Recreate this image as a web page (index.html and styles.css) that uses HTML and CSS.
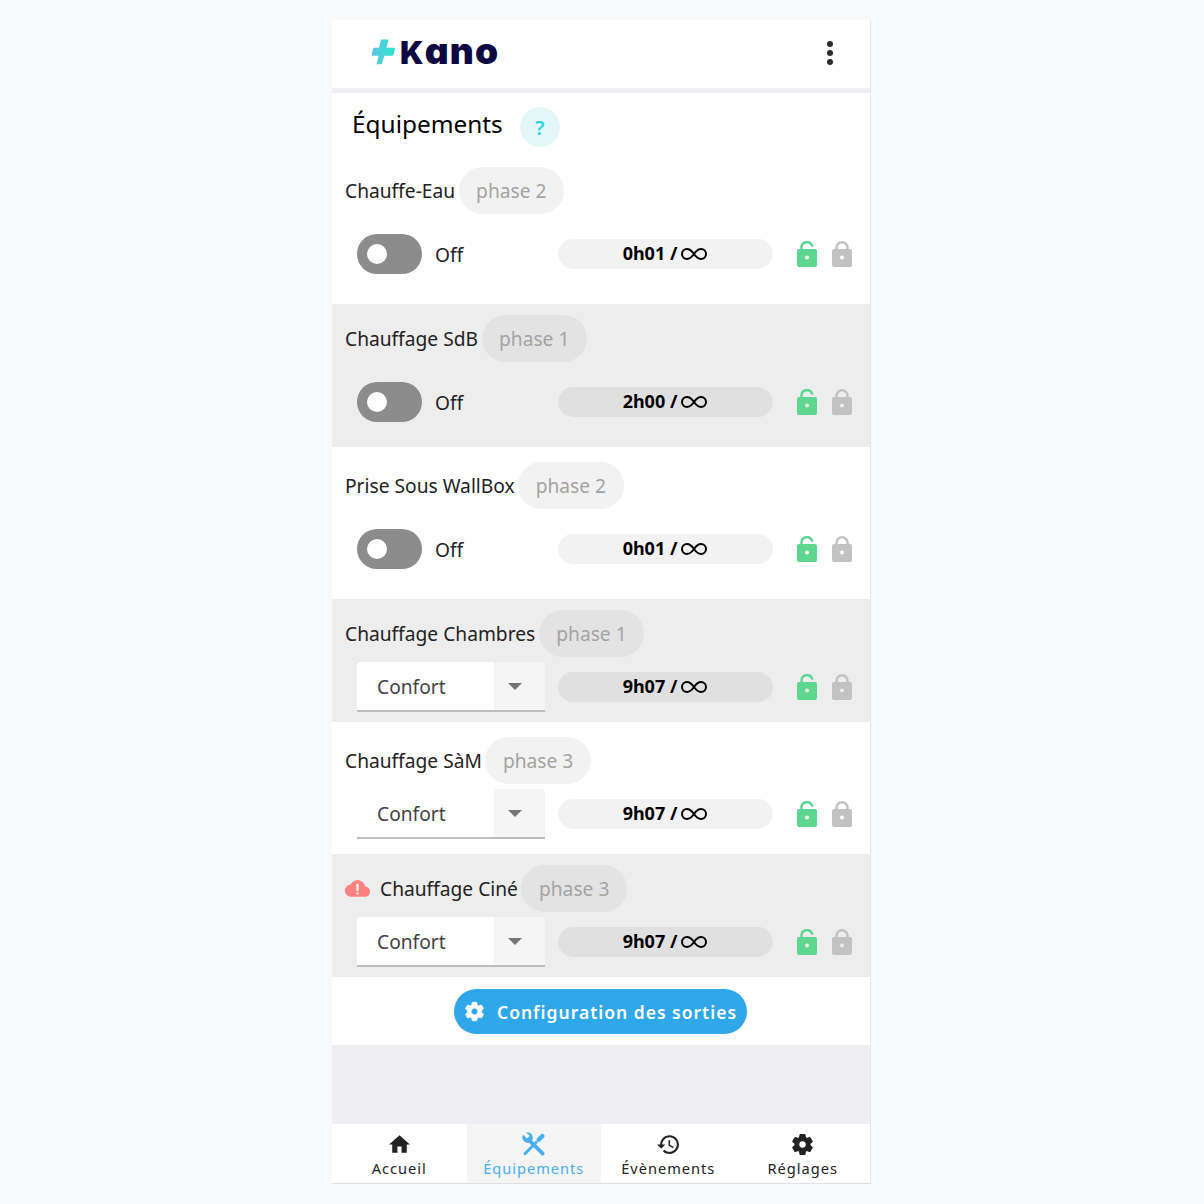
FILE: index.html
```html
<!DOCTYPE html>
<html lang="fr">
<head>
<meta charset="utf-8">
<title>Kano</title>
<link rel="stylesheet" href="styles.css">
</head>
<body>
<svg class="defs" width="0" height="0" aria-hidden="true">
  <symbol id="inf" viewBox="0 0 26 14"><path fill="none" stroke="#000" stroke-width="2" d="M13 7C10.5 3.5 8.5 2 6 2A5 5 0 0 0 6 12C8.5 12 10.5 10.5 13 7C15.5 3.5 17.5 2 20 2A5 5 0 0 1 20 12C17.5 12 15.5 10.5 13 7Z"/></symbol>
  <symbol id="open" viewBox="0 0 20 26"><path d="M4.5 9.5V6.8a5.5 5.5 0 0 1 10.6-2.2" fill="none" stroke="#5fd68f" stroke-width="2.5" stroke-linecap="round"/><path fill-rule="evenodd" fill="#5fd68f" d="M2 8h16a2 2 0 0 1 2 2v14a2 2 0 0 1-2 2H2a2 2 0 0 1-2-2V10a2 2 0 0 1 2-2zm8 6.5a2 2 0 1 0 0 4 2 2 0 0 0 0-4z"/></symbol>
  <symbol id="shut" viewBox="0 0 20 26"><path d="M4.5 9.5V6.800a5.5 5.5 0 0 1 11 0V9.5" fill="none" stroke="#c2c2c2" stroke-width="2.5"/><path fill-rule="evenodd" fill="#c2c2c2" d="M2 8h16a2 2 0 0 1 2 2v14a2 2 0 0 1-2 2H2a2 2 0 0 1-2-2V10a2 2 0 0 1 2-2zm8 6.5a2 2 0 1 0 0 4 2 2 0 0 0 0-4z"/></symbol>
  <symbol id="gear" viewBox="0 0 24 24"><path stroke="currentColor" stroke-width="1" d="M19.14 12.94c.04-.3.06-.61.06-.94 0-.32-.02-.64-.07-.94l2.03-1.58c.18-.14.23-.41.12-.61l-1.92-3.32c-.12-.22-.37-.29-.59-.22l-2.39.96c-.5-.38-1.03-.7-1.62-.94l-.36-2.54c-.04-.24-.24-.41-.48-.41h-3.84c-.24 0-.43.17-.47.41l-.36 2.54c-.59.24-1.13.57-1.62.94l-2.39-.96c-.22-.08-.47 0-.59.22L2.74 8.87c-.12.21-.08.47.12.61l2.03 1.58c-.05.3-.09.63-.09.94s.02.64.07.94l-2.03 1.58c-.18.14-.23.41-.12.61l1.92 3.32c.12.22.37.29.59.22l2.39-.96c.5.38 1.03.7 1.62.94l.36 2.54c.05.24.24.41.48.41h3.84c.24 0 .44-.17.47-.41l.36-2.54c.59-.24 1.13-.56 1.62-.94l2.39.96c.22.08.47 0 .59-.22l1.92-3.32c.12-.22.07-.47-.12-.61l-2.01-1.58zM12 15.6c-1.98 0-3.6-1.62-3.6-3.6s1.62-3.6 3.6-3.6 3.6 1.62 3.6 3.6-1.62 3.6-3.6 3.6z"/></symbol>
</svg>

<main class="app">
  <header class="topbar">
    <div class="logo">
      <svg class="bolt" viewBox="0 0 24 26"><defs><linearGradient id="boltfill" x1="0" x2="1" y1="0.2" y2="0.2"><stop offset="0" stop-color="#62c3ea"/><stop offset="1" stop-color="#2be6c6"/></linearGradient></defs><path fill="url(#boltfill)" d="M10 .5H17.5L15.3 8.8H23Q24.3 8.8 24 10L22.5 15.5Q22.2 16.8 21 16.8H13.3L11.2 24Q11 25.2 9.8 25.2H5.5L7.6 16.8H1.5Q.4 16.8 .7 15.5L2.1 10Q2.4 8.8 3.6 8.8H8Z"/></svg>
      <span class="word"><span class="word-k">K</span>ano</span>
    </div>
    <div class="kebab"><i></i><i></i><i></i></div>
  </header>

  <section class="list">
    <div class="title-row">
      <h1 class="title">Équipements</h1>
      <span class="help">?</span>
    </div>

    <article class="row tall">
      <div class="head"><span class="name">Chauffe-Eau</span><span class="phase">phase 2</span></div>
      <div class="controls">
        <div class="left"><span class="toggle"><b></b></span><span class="off">Off</span></div>
        <div class="timer"><span class="time">0h01 /</span><svg class="inf"><use href="#inf"/></svg></div>
        <svg class="lock"><use href="#open"/></svg><svg class="lock"><use href="#shut"/></svg>
      </div>
    </article>

    <article class="row tall alt">
      <div class="head"><span class="name">Chauffage SdB</span><span class="phase">phase 1</span></div>
      <div class="controls">
        <div class="left"><span class="toggle"><b></b></span><span class="off">Off</span></div>
        <div class="timer"><span class="time">2h00 /</span><svg class="inf"><use href="#inf"/></svg></div>
        <svg class="lock"><use href="#open"/></svg><svg class="lock"><use href="#shut"/></svg>
      </div>
    </article>

    <article class="row tall">
      <div class="head"><span class="name">Prise Sous WallBox</span><span class="phase">phase 2</span></div>
      <div class="controls">
        <div class="left"><span class="toggle"><b></b></span><span class="off">Off</span></div>
        <div class="timer"><span class="time">0h01 /</span><svg class="inf"><use href="#inf"/></svg></div>
        <svg class="lock"><use href="#open"/></svg><svg class="lock"><use href="#shut"/></svg>
      </div>
    </article>

    <article class="row alt">
      <div class="head"><span class="name">Chauffage Chambres</span><span class="phase">phase 1</span></div>
      <div class="controls">
        <div class="left"><div class="select"><span class="value">Confort</span><span class="arrow"><i></i></span></div></div>
        <div class="timer"><span class="time">9h07 /</span><svg class="inf"><use href="#inf"/></svg></div>
        <svg class="lock"><use href="#open"/></svg><svg class="lock"><use href="#shut"/></svg>
      </div>
    </article>

    <article class="row">
      <div class="head"><span class="name">Chauffage SàM</span><span class="phase">phase 3</span></div>
      <div class="controls">
        <div class="left"><div class="select"><span class="value">Confort</span><span class="arrow"><i></i></span></div></div>
        <div class="timer"><span class="time">9h07 /</span><svg class="inf"><use href="#inf"/></svg></div>
        <svg class="lock"><use href="#open"/></svg><svg class="lock"><use href="#shut"/></svg>
      </div>
    </article>

    <article class="row alt">
      <div class="head">
        <svg class="cloud" viewBox="0 0 24 24"><path fill="#ff8080" d="M19.35 10.04C18.67 6.59 15.64 4 12 4 9.11 4 6.6 5.64 5.35 8.04 2.34 8.36 0 10.91 0 14c0 3.31 2.69 6 6 6h13c2.76 0 5-2.24 5-5 0-2.64-2.05-4.78-4.65-4.96z"/><path fill="#fff" d="M11 7.5h2v7h-2zM11 15.8h2v2h-2z"/></svg>
        <span class="name">Chauffage Ciné</span><span class="phase">phase 3</span>
      </div>
      <div class="controls">
        <div class="left"><div class="select"><span class="value">Confort</span><span class="arrow"><i></i></span></div></div>
        <div class="timer"><span class="time">9h07 /</span><svg class="inf"><use href="#inf"/></svg></div>
        <svg class="lock"><use href="#open"/></svg><svg class="lock"><use href="#shut"/></svg>
      </div>
    </article>

    <div class="action">
      <button class="config"><svg class="config-icon"><use href="#gear"/></svg>Configuration des sorties</button>
    </div>
  </section>

  <div class="spacer"></div>

  <nav class="nav">
    <div class="tab">
      <svg class="tab-icon" viewBox="0 0 24 24"><path d="M10 20v-6h4v6h5v-8h3L12 3 2 12h3v8z"/></svg>
      <span class="tab-label">Accueil</span>
    </div>
    <div class="tab active">
      <svg class="tab-icon" viewBox="0 0 24 24"><g fill="none" stroke="currentColor" stroke-linecap="round"><path stroke-width="3.6" d="M8.5 8.5L20.8 20.8"/><path stroke-width="2.8" d="M3.8 20.8L14.5 10"/><path stroke-width="4.2" d="M17 7.5L20.5 4"/></g><path fill="currentColor" d="M2.2 2.6L5.8 6.2 8.4 3.6 5 .6C8 -.2 11.2 1.8 11.4 5.2c.2 3.6-3.4 6-6.6 4.8C1.6 8.800 .2 5.400 2.200 2.600z"/></svg>
      <span class="tab-label">Équipements</span>
    </div>
    <div class="tab">
      <svg class="tab-icon" viewBox="0 0 24 24"><path d="M13 3c-4.97 0-9 4.03-9 9H1l3.89 3.89.07.14L9 12H6c0-3.87 3.13-7 7-7s7 3.13 7 7-3.13 7-7 7c-1.93 0-3.68-.79-4.94-2.06l-1.42 1.42C8.27 19.99 10.51 21 13 21c4.97 0 9-4.03 9-9s-4.03-9-9-9zm-1 5v5l4.28 2.54.72-1.21-3.5-2.08V8H12z"/></svg>
      <span class="tab-label">Évènements</span>
    </div>
    <div class="tab">
      <svg class="tab-icon"><use href="#gear"/></svg>
      <span class="tab-label">Réglages</span>
    </div>
  </nav>
</main>
</body>
</html>
```
FILE: styles.css
```css
* { box-sizing: border-box; }
html, body { margin: 0; padding: 0; }
body {
  background: #f8f9fb;
  font-family: "Noto Sans", "Open Sans", sans-serif;
  color: #222;
}
.defs { display: block; height: 0; }
.app {
  width: 539px;
  height: 1164px;
  margin: 20px 0 0 332px;
  display: flex;
  flex-direction: column;
  background: #fff;
  border-right: 1px solid #e6e6e6;
  border-bottom: 1px solid #e0e0e0;
}
.topbar {
  height: 73px;
  flex: none;
  display: flex;
  align-items: center;
  justify-content: space-between;
  padding: 0 37px 5px 39px;
  border-bottom: 5px solid #eeeef2;
}
.logo { display: flex; align-items: center; gap: 5px; }
.bolt { width: 24px; height: 26px; }
.word {
  font-family: Inter, sans-serif;
  font-weight: 900;
  font-size: 37px;
  line-height: 40px;
  color: #0d0842;
  letter-spacing: 1.2px;
  font-feature-settings: "cv11";
}
.word-k { font-size: 31px; }
.kebab { display: flex; flex-direction: column; gap: 3px; margin-top: 2px; }
.kebab i { width: 6px; height: 6px; border-radius: 50%; background: #2b2b2b; }
.list { flex: none; }
.title-row {
  height: 59px;
  display: flex;
  align-items: flex-start;
  padding: 14px 0 0 20px;
}
.title {
  margin: 0;
  font-size: 24.4px;
  line-height: 34px;
  font-weight: 400;
  color: #000;
}
.help {
  width: 40px;
  height: 40px;
  margin-left: 17px;
  border-radius: 50%;
  background: #e3f7f9;
  color: #2fd3e0;
  font-size: 20px;
  font-weight: 600;
  display: flex;
  align-items: center;
  justify-content: center;
}
.row { padding: 15px 0 15px 0; background: #fff; }
.row.alt { padding: 11px 0 10px 0; background: #ededed; }
.head {
  display: flex;
  align-items: center;
  height: 47px;
  padding-left: 13px;
}
.name { font-size: 19.2px; line-height: 28px; color: #222; }
.phase {
  height: 47px;
  margin-left: 3.5px;
  padding: 0 17.5px;
  border-radius: 24px;
  background: #f2f2f2;
  color: #a3a3a3;
  font-size: 19.2px;
  line-height: 47px;
}
.alt .phase { background: #e3e3e3; }
.cloud { width: 25px; height: 25px; margin-right: 10px; }
.controls {
  display: flex;
  align-items: center;
  height: 50px;
  margin-top: 5px;
  padding-left: 25px;
}
.tall .controls { height: 40px; margin-top: 20px; }
.tall { padding-bottom: 30px; }
.row.tall.alt { padding-bottom: 25px; }
.left { width: 201px; flex: none; display: flex; align-items: center; }
.toggle {
  width: 65px;
  height: 40px;
  border-radius: 20px;
  background: #8c8c8c;
  display: flex;
  align-items: center;
  padding-left: 10px;
}
.toggle b { width: 20px; height: 20px; border-radius: 50%; background: #fff; }
.off { margin-left: 13px; font-size: 19.2px; color: #222; }
.select {
  width: 188px;
  height: 50px;
  display: flex;
  border-bottom: 2px solid #bdbdbd;
  border-radius: 4px 4px 0 0;
  overflow: hidden;
  background: #fff;
}
.value {
  flex: 1;
  padding-left: 20px;
  font-size: 19.2px;
  line-height: 50px;
  color: #444;
}
.arrow {
  width: 51px;
  background: #f5f5f5;
  display: flex;
  align-items: center;
  justify-content: flex-start;
  padding-left: 14px;
}
.arrow i {
  width: 0;
  height: 0;
  border-left: 7px solid transparent;
  border-right: 7px solid transparent;
  border-top: 7px solid #757575;
}
.timer {
  width: 215px;
  height: 30px;
  border-radius: 15px;
  background: #f2f2f2;
  display: flex;
  align-items: center;
  justify-content: center;
  gap: 4px;
  padding-right: 1px;
  font-size: 18px;
  font-weight: 700;
  color: #000;
}
.time { margin-bottom: 2px; }
.alt .timer { background: #e0e0e0; }
.inf { width: 26px; height: 14px; }
.lock { width: 20px; height: 26px; margin-left: 15px; flex: none; }
.timer + .lock { margin-left: 24px; }
.action {
  height: 68px;
  display: flex;
  align-items: flex-start;
  justify-content: center;
  padding: 12px 2px 0 0;
}
.config {
  width: 293px;
  height: 45px;
  border: 0;
  border-radius: 23px;
  background: #30a7e8;
  color: #fff;
  font-family: inherit;
  font-size: 17.5px;
  font-weight: 600;
  letter-spacing: 1px;
  display: flex;
  align-items: center;
  justify-content: center;
  gap: 11px;
  white-space: nowrap;
}
.config-icon { width: 23px; height: 23px; fill: #fff; color: #fff; }
.spacer { flex: 1; background: #eeeef2; }
.nav {
  flex: none;
  height: 59px;
  display: grid;
  grid-template-columns: repeat(4, 1fr);
}
.tab {
  display: flex;
  flex-direction: column;
  align-items: center;
  padding-top: 8px;
  color: #222;
  font-size: 14.6px;
  letter-spacing: 1px;
  line-height: 20px;
}
.tab-label { margin-top: 1px; }
.tab.active { background: #f5f5f5; color: #4aaeef; }
.tab-icon { width: 25px; height: 25px; fill: currentColor; color: inherit; flex: none; }
```
